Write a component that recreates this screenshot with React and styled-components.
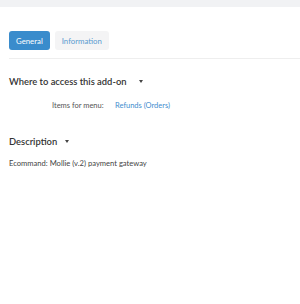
import React from "react";
import styled, { createGlobalStyle } from "styled-components";

const Global = createGlobalStyle`
  html, body {
    margin: 0;
    padding: 0;
    background: #fff;
    font-family: Lato, "Open Sans", "Liberation Sans", sans-serif;
  }
`;

const Page = styled.div`
  width: 300px;
  height: 304px;
  overflow: hidden;
  background: #fff;
`;

const TopBar = styled.div`
  height: 7px;
  background: #f1f2f4;
`;

const Content = styled.div`
  padding: 24px 0 0 9px;
`;

const Tabs = styled.div`
  display: flex;
  gap: 5px;
  padding-bottom: 8px;
  border-bottom: 1px solid #eeeeee;
`;

const Tab = styled.div`
  height: 19px;
  padding: 0 7px;
  display: flex;
  align-items: center;
  border-radius: 3px;
  font-size: 7.8px;
  background: ${(p) => (p.$active ? "#3a8ccc" : "#f4f4f5")};
  color: ${(p) => (p.$active ? "#ffffff" : "#5a9bd0")};
`;

const Section = styled.div`
  margin-top: ${(p) => p.$top}px;
`;

const Heading = styled.div`
  display: flex;
  align-items: center;
  gap: ${(p) => p.$gap}px;
  font-size: 9.4px;
  font-weight: 600;
  color: #333;
  height: 14px;
`;

const Caret = styled.span`
  width: 0;
  height: 0;
  border-left: 2.5px solid transparent;
  border-right: 2.5px solid transparent;
  border-top: 3px solid #444;
`;

const Row = styled.div`
  display: flex;
  align-items: center;
  margin-top: 12px;
  padding-left: 43px;
  font-size: 7.5px;
  height: 10px;
`;

const Label = styled.span`
  width: 63px;
  color: #555;
`;

const LinkText = styled.span`
  color: #3f8dce;
`;

const Text = styled.div`
  margin-top: 10px;
  font-size: 7.6px;
  color: #444;
`;

export default function App() {
  return (
    <Page>
      <Global />
      <TopBar />
      <Content>
        <Tabs>
          <Tab $active>General</Tab>
          <Tab>Information</Tab>
        </Tabs>
        <Section $top={15}>
          <Heading $gap={12}>
            Where to access this add-on
            <Caret />
          </Heading>
          <Row>
            <Label>Items for menu:</Label>
            <LinkText>Refunds (Orders)</LinkText>
          </Row>
        </Section>
        <Section $top={24}>
          <Heading $gap={8}>
            Description
            <Caret />
          </Heading>
          <Text>Ecommand: Mollie (v.2) payment gateway</Text>
        </Section>
      </Content>
    </Page>
  );
}
